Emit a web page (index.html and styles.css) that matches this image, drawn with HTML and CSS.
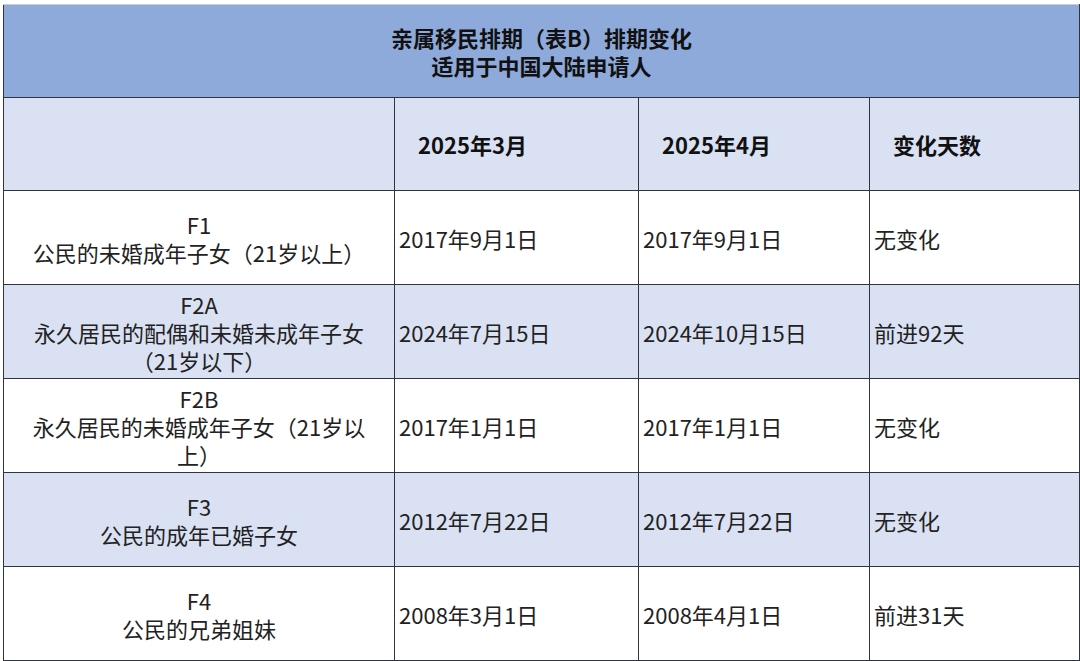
FILE: index.html
```html
<!DOCTYPE html>
<html lang="zh-CN">
<head>
<meta charset="utf-8">
<link rel="stylesheet" href="styles.css">
</head>
<body>
<div class="wrap">
<table class="sched">
  <colgroup>
    <col class="c1"><col class="c2"><col class="c3"><col class="c4">
  </colgroup>
  <thead>
    <tr class="title-row">
      <th colspan="4" class="title">亲属移民排期（表B）排期变化<br>适用于中国大陆申请人</th>
    </tr>
    <tr class="head-row shade">
      <th></th>
      <th class="colh">2025年3月</th>
      <th class="colh">2025年4月</th>
      <th class="colh">变化天数</th>
    </tr>
  </thead>
  <tbody>
    <tr>
      <td class="cat">F1<br>公民的未婚成年子女（21岁以上）</td>
      <td>2017年9月1日</td>
      <td>2017年9月1日</td>
      <td>无变化</td>
    </tr>
    <tr class="shade">
      <td class="cat">F2A<br>永久居民的配偶和未婚未成年子女<br>（21岁以下）</td>
      <td>2024年7月15日</td>
      <td>2024年10月15日</td>
      <td>前进92天</td>
    </tr>
    <tr>
      <td class="cat">F2B<br>永久居民的未婚成年子女（21岁以<br>上）</td>
      <td>2017年1月1日</td>
      <td>2017年1月1日</td>
      <td>无变化</td>
    </tr>
    <tr class="shade">
      <td class="cat">F3<br>公民的成年已婚子女</td>
      <td>2012年7月22日</td>
      <td>2012年7月22日</td>
      <td>无变化</td>
    </tr>
    <tr>
      <td class="cat">F4<br>公民的兄弟姐妹</td>
      <td>2008年3月1日</td>
      <td>2008年4月1日</td>
      <td>前进31天</td>
    </tr>
  </tbody>
</table>
</div>
</body>
</html>
```

FILE: styles.css
```css
html, body {
  margin: 0;
  padding: 0;
  background: #ffffff;
}

.wrap {
  padding: 4px 0 0 3px;
}

.sched {
  width: 1076px;
  border-collapse: collapse;
  table-layout: fixed;
  font-family: "Noto Sans CJK SC", "Noto Sans", sans-serif;
  font-size: 22px;
  line-height: 28px;
  color: #222222;
}

.c1 { width: 391px; }
.c2 { width: 244px; }
.c3 { width: 231px; }
.c4 { width: 210px; }

.sched th,
.sched td {
  border: 1px solid #2e3440;
  padding: 0 4px;
  height: 94px;
  box-sizing: border-box;
  vertical-align: middle;
  text-align: left;
  font-weight: 400;
}

.sched thead th {
  height: 93px;
}

.title-row .title {
  background: #8eaadb;
  text-align: center;
  font-weight: 700;
  font-size: 22px;
  color: #111;
  border-top-color: #c9ced6;
}

.shade th,
.shade td {
  background: #d9e1f2;
}

.head-row .colh {
  font-weight: 700;
  padding-left: 23px;
  color: #111;
}

.sched td.cat {
  text-align: center;
}
```
